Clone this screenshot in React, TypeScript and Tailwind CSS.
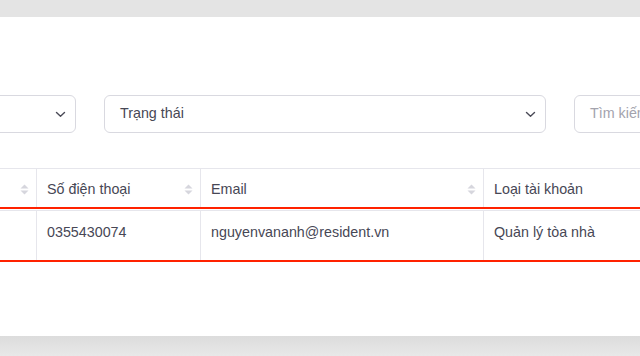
const font = { fontFamily: '"Liberation Sans", Arial, sans-serif' };

function Chevron() {
  return (
    <svg width="11" height="7" viewBox="0 0 11 7" fill="none" className="shrink-0">
      <path d="M1.5 1.5 L5.5 5.2 L9.5 1.5" stroke="#4b4b57" strokeWidth="1.4" strokeLinecap="round" strokeLinejoin="round" />
    </svg>
  );
}

function SortIcon() {
  return (
    <svg width="9" height="11" viewBox="0 0 9 11" className="shrink-0">
      <path d="M4.5 0.5 L8.5 4.5 L0.5 4.5 Z" fill="#d6d6dd" />
      <path d="M0.5 6.5 L8.5 6.5 L4.5 10.5 Z" fill="#d6d6dd" />
    </svg>
  );
}

export default function App() {
  const columns = [
    { key: 'name', title: '', width: 'w-[160px]', sort: true },
    { key: 'phone', title: 'Số điện thoại', width: 'w-[164px]', sort: true },
    { key: 'email', title: 'Email', width: 'w-[283px]', sort: true },
    { key: 'type', title: 'Loại tài khoản', width: 'w-[200px]', sort: false },
  ];
  const row = ['', '0355430074', 'nguyenvananh@resident.vn', 'Quản lý tòa nhà'];

  return (
    <div className="w-[640px] h-[356px] bg-[#e4e4e4] overflow-hidden flex flex-col" style={font}>
      <div className="h-[17px] shrink-0" />
      <div className="h-[319px] shrink-0 bg-white overflow-hidden text-[14.3px] text-[#474755]">
        <div className="h-[78px]" />
        <div className="flex gap-[28px] ml-[-365px] h-[38px]">
          <div className="w-[441px] shrink-0 rounded-md border border-[#d9d9e0] flex items-center justify-end pr-[9px]">
            <Chevron />
          </div>
          <div className="w-[442px] shrink-0 rounded-md border border-[#d9d9e0] flex items-center justify-between pl-[15px] pr-[9px]">
            <span>Trạng thái</span>
            <Chevron />
          </div>
          <div className="w-[300px] shrink-0 rounded-md border border-[#d9d9e0] flex items-center pl-[15px] text-[#a3a3ad]">
            Tìm kiếm
          </div>
        </div>
        <div className="h-[35px]" />
        <div className="ml-[-123px]">
          <div className="flex h-[39px] border-t border-[#e6e6ec]">
            {columns.map((c) => (
              <div
                key={c.key}
                className={`${c.width} shrink-0 flex items-center justify-between pl-[10px] pr-[7px] pt-[3px] ${c.sort ? 'border-r border-[#e6e6ec]' : ''}`}
              >
                <span>{c.title}</span>
                {c.sort && <SortIcon />}
              </div>
            ))}
          </div>
          <div className="border-y-2 border-[#ff2200] pt-px">
            <div className="flex h-[50px] border-t border-[#e6e6ec]">
              {columns.map((c, i) => (
                <div
                  key={c.key}
                  className={`${c.width} shrink-0 flex items-center pl-[10px] pb-[5px] ${c.sort ? 'border-r border-[#e6e6ec]' : ''}`}
                >
                  {row[i]}
                </div>
              ))}
            </div>
          </div>
        </div>
      </div>
      <div className="flex-1 bg-gradient-to-b from-[#dcdcdc] to-[#e8e8e8]" />
    </div>
  );
}
